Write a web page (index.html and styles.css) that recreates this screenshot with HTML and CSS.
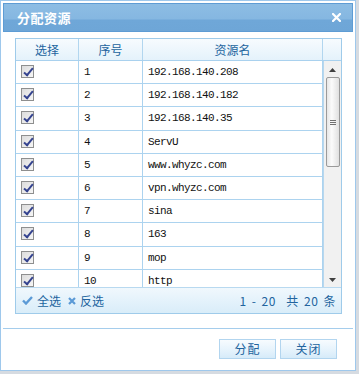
FILE: index.html
```html
<!DOCTYPE html>
<html lang="zh">
<head>
<meta charset="utf-8">
<title>分配资源</title>
<link rel="stylesheet" href="styles.css">
</head>
<body>
<div class="dialog">
  <div class="titlebar">
    <span class="title">分配资源</span>
    <svg class="close" width="9" height="9" viewBox="0 0 9 9"><path d="M1 1 L8 8 M8 1 L1 8" stroke="#fff" stroke-width="2.2" stroke-linecap="square"/></svg>
  </div>
  <div class="content">
    <div class="grid">
      <div class="ghead">
        <div class="hc">选择</div>
        <div class="hc">序号</div>
        <div class="hc">资源名</div>
        <div class="hc hs"></div>
      </div>
      <div class="gbody">
        <div class="rows">
          <div class="row"><div class="c c1"><span class="cb"></span></div><div class="c c2">1</div><div class="c c3">192.168.140.208</div></div>
          <div class="row"><div class="c c1"><span class="cb"></span></div><div class="c c2">2</div><div class="c c3">192.168.140.182</div></div>
          <div class="row"><div class="c c1"><span class="cb"></span></div><div class="c c2">3</div><div class="c c3">192.168.140.35</div></div>
          <div class="row"><div class="c c1"><span class="cb"></span></div><div class="c c2">4</div><div class="c c3">ServU</div></div>
          <div class="row"><div class="c c1"><span class="cb"></span></div><div class="c c2">5</div><div class="c c3">www.whyzc.com</div></div>
          <div class="row"><div class="c c1"><span class="cb"></span></div><div class="c c2">6</div><div class="c c3">vpn.whyzc.com</div></div>
          <div class="row"><div class="c c1"><span class="cb"></span></div><div class="c c2">7</div><div class="c c3">sina</div></div>
          <div class="row"><div class="c c1"><span class="cb"></span></div><div class="c c2">8</div><div class="c c3">163</div></div>
          <div class="row"><div class="c c1"><span class="cb"></span></div><div class="c c2">9</div><div class="c c3">mop</div></div>
          <div class="row"><div class="c c1"><span class="cb"></span></div><div class="c c2">10</div><div class="c c3">http</div></div>
        </div>
        <div class="sbar">
          <svg class="arr" width="7" height="4" viewBox="0 0 7 4"><path d="M3.5 0 L7 4 L0 4 Z" fill="#404040"/></svg>
          <div class="thumb"><span class="grip"></span></div>
          <div class="track"></div>
          <svg class="arr" width="7" height="4" viewBox="0 0 7 4"><path d="M0 0 L7 0 L3.5 4 Z" fill="#404040"/></svg>
        </div>
      </div>
      <div class="gfoot">
        <div class="acts">
          <span class="act"><svg width="11" height="9" viewBox="0 0 11 9"><path d="M1 4.5 L4 7.5 L10 1" fill="none" stroke="#5b9ad6" stroke-width="2.4"/></svg>全选</span>
          <span class="act"><svg width="8" height="8" viewBox="0 0 8 8"><path d="M1 1 L7 7 M7 1 L1 7" stroke="#5b9ad6" stroke-width="2.2"/></svg>反选</span>
        </div>
        <div class="pager">1 - 20 &nbsp;共 20 条</div>
      </div>
    </div>
  </div>
  <div class="sep"></div>
  <div class="buttons">
    <button class="btn">分配</button>
    <button class="btn">关闭</button>
  </div>
</div>
</body>
</html>
```
FILE: styles.css
```css
* { box-sizing: border-box; }
html, body { margin: 0; padding: 0; }
body {
  background: #d6dbe1;
  width: 359px;
  height: 374px;
  overflow: hidden;
  font-family: "Noto Sans CJK SC", "Liberation Sans", sans-serif;
}
.dialog {
  width: 356px;
  height: 371px;
  background: #fff;
  border: 1px solid #9ec8ec;
  padding: 2px;
  display: flex;
  flex-direction: column;
}
.titlebar {
  height: 29px;
  border: 1px solid #5e9cd4;
  background: linear-gradient(#8dbde4 0%, #85b7e1 55%, #6fa7d8 60%, #6ea6d7 100%);
  display: flex;
  align-items: center;
  justify-content: space-between;
  padding: 0 11px 0 13px;
}
.title {
  color: #fff;
  font-size: 13px;
  font-weight: bold;
  letter-spacing: 0.5px;
  line-height: 1;
  margin-top: -1px;
}
.close { display: block; margin-top: -1px; }
.content {
  padding: 6px 0 0 12px;
  height: 296px;
}
.grid {
  width: 327px;
  height: 276px;
  border: 1px solid #9fcbea;
  display: flex;
  flex-direction: column;
}
.ghead {
  display: grid;
  grid-template-columns: 63px 64px 180px 18px;
  height: 22px;
  border-bottom: 1px solid #a9d1ee;
  background: linear-gradient(#f7fbfe, #e4f2fb);
}
.hc {
  color: #22649e;
  font-size: 12px;
  line-height: 21px;
  text-align: center;
  border-right: 1px solid #b2d6ef;
}
.hs { border-right: 0; }
.gbody {
  display: flex;
  height: 226px;
  overflow: hidden;
}
.rows {
  width: 307px;
  overflow: hidden;
}
.row {
  display: grid;
  grid-template-columns: 63px 64px 180px;
  height: 23.2px;
  border-bottom: 1px solid #acd3ef;
}
.c {
  border-right: 1px solid #acd3ef;
  font-family: "Liberation Mono", monospace;
  font-size: 11px;
  letter-spacing: -0.6px;
  color: #111;
  padding: 4px 0 0 5px;
  line-height: 14px;
}
.c1 { padding: 4px 0 0 5px; }
.cb {
  display: block;
  width: 13px;
  height: 13px;
  border: 1px solid #8e8f8f;
  background: linear-gradient(135deg, #dcdcdc, #f6f6f6);
  position: relative;
}
.cb::after {
  content: "";
  position: absolute;
  left: 4px;
  top: 0px;
  width: 3px;
  height: 8px;
  border-right: 2px solid #34438f;
  border-bottom: 2px solid #34438f;
  transform: rotate(40deg);
}
.sbar {
  width: 18px;
  background: #f1f1f1;
  border-left: 1px solid #b7d7ee;
  display: flex;
  flex-direction: column;
  align-items: center;
  padding: 7px 0 5px;
}
.arr { display: block; flex: none; }
.thumb {
  margin-top: 5px;
  width: 14px;
  height: 90px;
  border: 1px solid #9a9a9a;
  border-radius: 2px;
  background: linear-gradient(90deg, #e6e6e6, #fbfbfb 40%, #e0e0e0);
  display: flex;
  align-items: center;
  justify-content: center;
}
.grip {
  width: 6px;
  height: 5px;
  border-top: 1px solid #707070;
  border-bottom: 1px solid #707070;
  position: relative;
}
.grip::after {
  content: "";
  position: absolute;
  left: 0; right: 0; top: 1px;
  border-top: 1px solid #707070;
}
.track { flex: 1; }
.gfoot {
  flex: 1;
  border-top: 1px solid #b8d9f0;
  background: linear-gradient(#f0f8fd, #e2f1fb 60%, #d9edf9);
  display: flex;
  align-items: center;
  justify-content: space-between;
  padding: 0 5px 0 6px;
  font-size: 12px;
  color: #22649e;
}
.acts { display: flex; gap: 7px; }
.act { display: flex; align-items: center; gap: 4px; }
.pager { letter-spacing: 0.5px; word-spacing: 2px; }
.sep {
  height: 1px;
  background: #a5cdec;
}
.buttons {
  display: flex;
  justify-content: flex-end;
  gap: 4px;
  padding: 10px 16px 0 0;
}
.btn {
  width: 57px;
  height: 20px;
  border: 1px solid #b2d5ef;
  background: linear-gradient(#f7fbfe, #e6f3fc 55%, #d6ebf9);
  color: #22649e;
  font-family: "Noto Sans CJK SC", sans-serif;
  font-size: 12px;
  line-height: 16px;
  padding: 0;
  letter-spacing: 1px;
}
```
